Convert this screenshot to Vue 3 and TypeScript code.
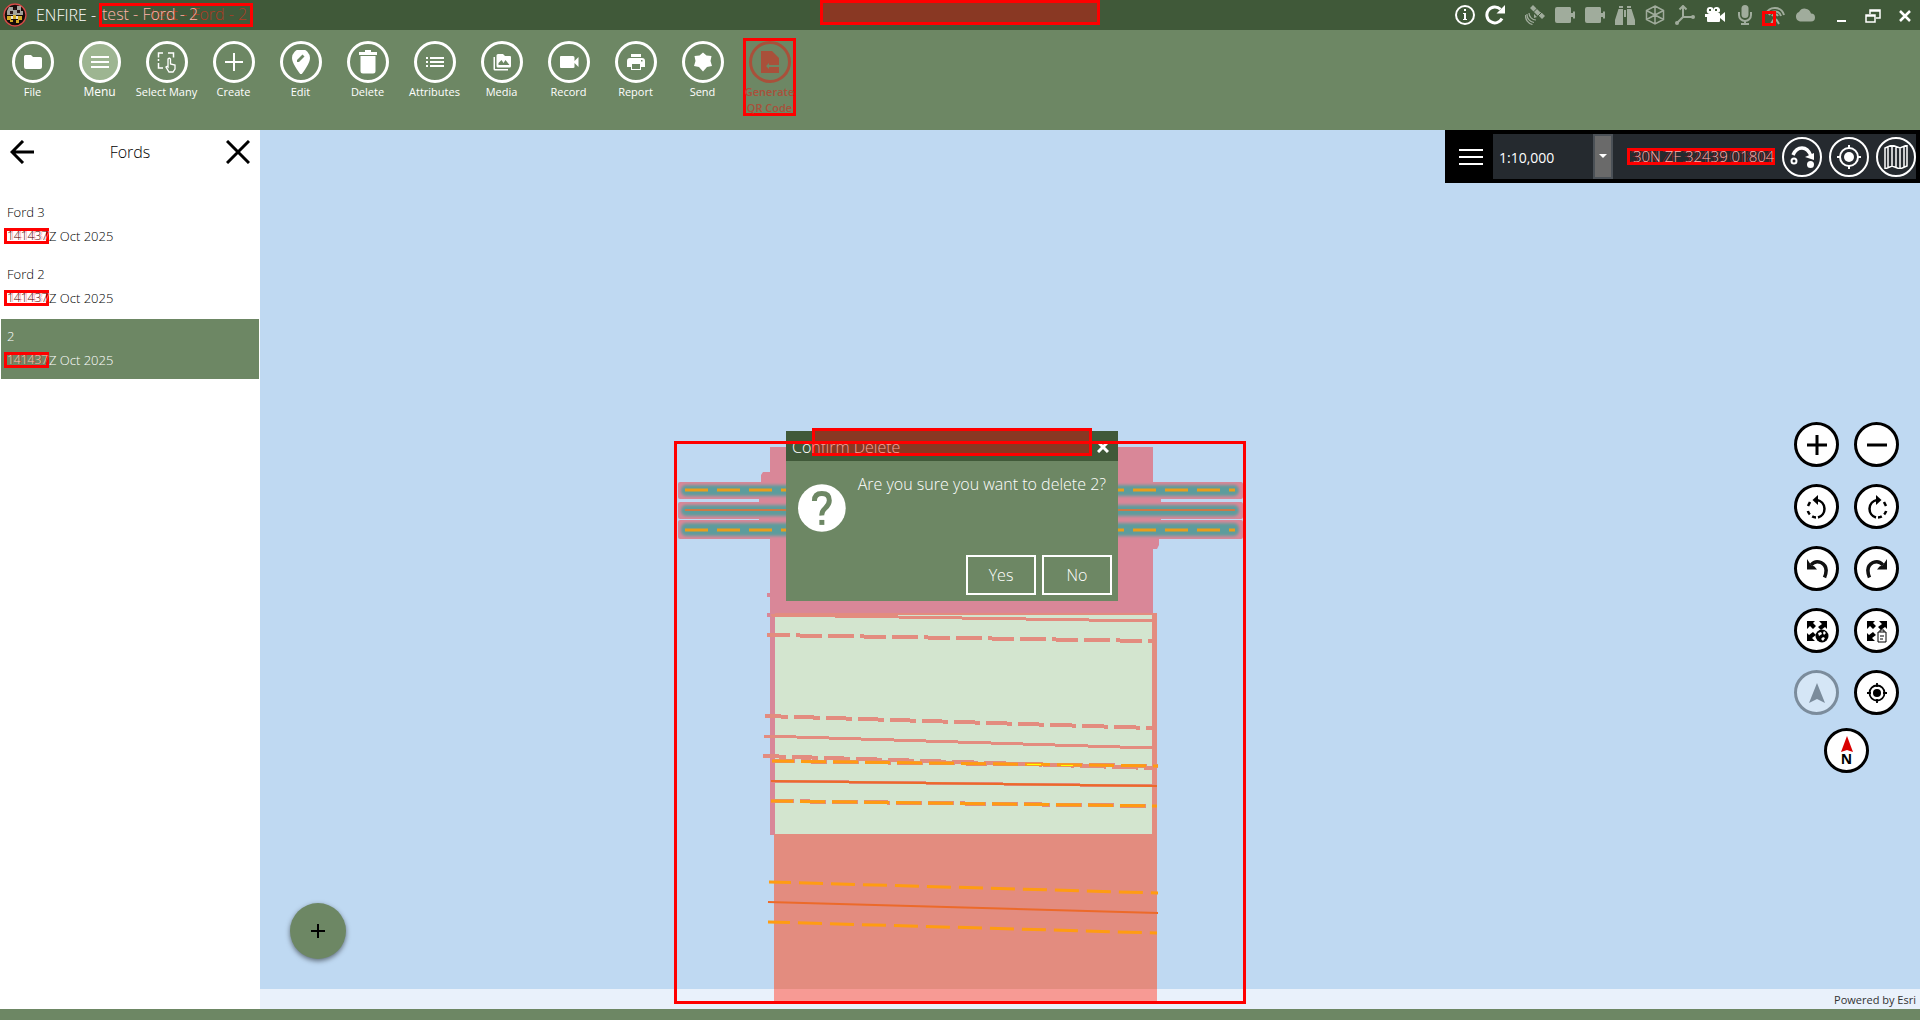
<script setup lang="ts">
import { ref } from 'vue'

interface Tool { label: string; icon: string }
interface Ford { name: string; time: string; date: string }

const tools: Tool[] = [
  { label: 'File', icon: 'file' },
  { label: 'Menu', icon: 'menu' },
  { label: 'Select Many', icon: 'select' },
  { label: 'Create', icon: 'plus' },
  { label: 'Edit', icon: 'edit' },
  { label: 'Delete', icon: 'trash' },
  { label: 'Attributes', icon: 'list' },
  { label: 'Media', icon: 'media' },
  { label: 'Record', icon: 'record' },
  { label: 'Report', icon: 'print' },
  { label: 'Send', icon: 'send' },
]

const fords: Ford[] = [
  { name: 'Ford 3', time: '141437', date: 'Z Oct 2025' },
  { name: 'Ford 2', time: '141437', date: 'Z Oct 2025' },
  { name: '2', time: '141437', date: 'Z Oct 2025' },
]

const devices = ['satellite', 'camera', 'camera', 'binoculars', 'cube', 'axes', 'movie', 'mic', 'antenna', 'cloud']
const mapButtons = ['zoom in', 'zoom out', 'rotate left', 'rotate right', 'undo', 'redo', 'full extent', 'report extent', 'navigate', 'locate']
const selected = ref(2)
const scale = ref('1:10,000')
</script>

<template>
  <div class="app">
    <header class="titlebar">
      <svg class="badge" viewBox="0 0 24 24" aria-hidden="true">
        <circle cx="12" cy="12" r="11.5" fill="#170d0b" />
        <circle cx="12" cy="12" r="11" fill="none" stroke="#d54f4a" stroke-width="1.4" />
        <path d="M6 4h4v3h4V3h4v5h2v4H4V8z" fill="#a3a39c" />
        <path d="M7 8h3v3H7zM14 7h3v3h-3zM11 5h2v2h-2z" fill="#2a1717" />
        <path d="M4 13h4v4H4zM10 12h3v4h-3zM15 13h4v4h-4zM7 17h3v2H7zM13 17h3v3h-3z" fill="#d5ac26" />
        <path d="M8 13h2v3H8zM13 13h2v3h-2z" fill="#ece7d9" />
      </svg>
      <h1 class="app-title">ENFIRE -</h1>
      <span class="mark mark-title">test - Ford - 2</span>
      <span class="mark mark-top"></span>
      <div class="status">
        <button class="bare" aria-label="Information">
          <svg viewBox="0 0 20 20"><circle cx="10" cy="10" r="9" fill="none" stroke="#fff" stroke-width="2" /><path d="M9 4h2v2H9zM8 8h3v6h1v1H8v-1h1V9H8z" fill="#fff" /></svg>
        </button>
        <button class="bare refresh" aria-label="Refresh">
          <svg viewBox="0 0 20 20"><path d="M17 13.5A8 8 0 1 1 15.5 4.2" fill="none" stroke="#fff" stroke-width="3" /><path d="M20 0v8.500h-8.500z" fill="#fff" /></svg>
        </button>
        <span v-for="(d, i) in devices" :key="i" class="device" :class="{ on: d === 'movie' }">
          <svg viewBox="0 0 20 20" fill="currentColor">
            <template v-if="d === 'satellite'">
              <path d="M5 3l3-3 4 4-3 3zM13 10l3-3 4 4-3 3zM9 7l3-3 4 4-3 3zM9 9l3 3-3 1z" />
              <path d="M4 8a7 7 0 0 0 7 7M2 9a8 8 0 0 0 7 8.500M.5 10a9 9 0 0 0 7 9.500" fill="none" stroke="currentColor" stroke-width="1.200" />
              <path d="M8 7.500L12.500 3M12.500 11.500L17 7" stroke="#405939" />
            </template>
            <path v-else-if="d === 'camera'" d="M2 2h13q1 0 1 1.500V8h2V6.500h2v7h-2V12h-2v4.500q0 1.500-1.500 1.500H2q-2 0-2-2V4q0-2 2-2z" />
            <path v-else-if="d === 'binoculars'" d="M4 1h4v2H4zM12 1h4v2h-4zM3.500 4H8v16H0v-5zM12 4h4.500L20 15v5h-8zM9 5h2v7H9z" />
            <path v-else-if="d === 'cube'" d="M10 1l8.500 4.500v9L10 19l-8.500-4.500v-9zM10 10V1M10 10l8.500-4.500M10 10L1.500 5.500M10 10v9M10 10l8.500 4.500M10 10l-8.500 4.500" fill="none" stroke="currentColor" stroke-width="1.500" />
            <template v-else-if="d === 'axes'">
              <path d="M8 1v11h11M8 12l-6 6M4.500 4.500L8 1l3.500 3.500" fill="none" stroke="currentColor" stroke-width="2" /><circle cx="18" cy="12" r="2" /><circle cx="2" cy="18" r="2" />
            </template>
            <path v-else-if="d === 'movie'" d="M5.500 2a3 3 0 0 1 3 3 3 3 0 0 1 3-3 3 3 0 0 1 1 6H14q1 0 1 1v2l5-4v10l-5-4v3q0 1-1 1H3q-1 0-1-1v-4H0V9h5a3.500 3.500 0 0 1 .5-7zM4 4v2h2V4zM10 4v2h2V4z" />
            <template v-else-if="d === 'mic'"><rect x="6.500" y="0" width="7" height="13" rx="3.500" /><path d="M4 7v3a6 6 0 0 0 12 0V7" fill="none" stroke="currentColor" stroke-width="2" /><path d="M9 15h2v3h3v2H6v-2h3z" /></template>
            <path v-else-if="d === 'antenna'" d="M1 9a9.500 9.500 0 0 1 18 1M4 10a6.500 6.500 0 0 1 12 1M7 11a3.500 3.500 0 0 1 6 0M10 11v4M9 14l-3 5M11 14l3 5" fill="none" stroke="currentColor" stroke-width="2" />
            <path v-else d="M5 16.500A5 5 0 0 1 4 7a6.500 6.500 0 0 1 12 1.500 4 4 0 0 1 0 8z" />
          </svg>
          <i v-if="d === 'antenna'" class="mark mark-device"></i>
        </span>
        <button class="bare win" aria-label="Minimize"><svg viewBox="0 0 20 20"><path d="M6 15h9v2H6z" fill="#fff" /></svg></button>
        <button class="bare win" aria-label="Restore"><svg viewBox="0 0 20 20"><path d="M7 9V5h10v8h-4M7 6h10M3 10h9v7H3zM3 11h9" fill="none" stroke="#fff" stroke-width="1.500" /></svg></button>
        <button class="bare win" aria-label="Close window"><svg viewBox="0 0 20 20"><path d="M5 6l10 10M15 6L5 16" stroke="#fff" stroke-width="2.500" /></svg></button>
      </div>
    </header>

    <nav class="toolbar">
      <button v-for="t in tools" :key="t.label" class="tool" :class="{ current: t.label === 'Menu' }">
        <span class="ring">
          <svg viewBox="0 0 24 24" fill="#fff">
            <path v-if="t.icon === 'file'" d="M4.500 5H10l2 2h7.500q1.500 0 1.500 1.500V17q0 2-2 2H5q-2 0-2-2V6.500Q3 5 4.500 5z" />
            <path v-else-if="t.icon === 'menu'" d="M3 6h18v2H3zm0 5h18v2H3zm0 5h18v2H3z" />
            <g v-else-if="t.icon === 'select'" fill="none" stroke="#fff" stroke-width="1.500"><path d="M8 3H3.500v4.500M13 3h5.500v4.500M3.500 13v5H8M3.500 9v2" /><path d="M13 17V9q1.500-1.500 2.500 0v5l4.500 1v4l-2 3h-4l-3-5q1-1 2 0z" stroke-width="1.300" /></g>
            <path v-else-if="t.icon === 'plus'" d="M11 3h2v8h8v2h-8v8h-2v-8H3v-2h8z" />
            <g v-else-if="t.icon === 'edit'"><path d="M12-1a9 9 0 0 1 9 9c0 6-9 17-9 17S3 14 3 8a9 9 0 0 1 9-9z" /><path d="M8 12v-2l5.500-5.500 2 2L10 12z" fill="#6d8764" /></g>
            <path v-else-if="t.icon === 'trash'" d="M9 0h6v2h6v3H3V2h6zM4.500 6h15v15q0 2.500-2.500 2.500H7Q4.500 23.500 4.500 21z" />
            <path v-else-if="t.icon === 'list'" d="M3 7h2v2H3zm0 4h2v2H3zm0 4h2v2H3zM7 7h14v2H7zm0 4h14v2H7zm0 4h14v2H7z" />
            <g v-else-if="t.icon === 'media'"><path d="M8 4h5l2 2h5q1 0 1 1v9q0 1.500-1.500 1.500H8q-1.500 0-1.500-1.500V5.500Q6.500 4 8 4zM3.500 7H5v12h13v1.500H5q-1.500 0-1.500-1.500z" /><path d="M8.500 15v-2l3-3 2 3 2-3 4 5z" fill="#6d8764" /></g>
            <path v-else-if="t.icon === 'record'" d="M4 6h12q1.500 0 1.500 1.500V11l4-4v10l-4-4v4q0 1-1.500 1H4q-1 0-1-1V7q0-1 1-1z" />
            <path v-else-if="t.icon === 'print'" fill-rule="evenodd" d="M7 4h10v3H7zM6 8h12q3 0 3 3v6h-4v3H7v-3H3v-6q0-3 3-3zm2 6v5h8v-5zm9-4v1.500h1.500V10z" />
            <path v-else d="M12 2.500l3.500 3 5 .5-1 5 1.500 5-5 1-4 4.500L8 17l-5-1 1.500-5-1-5 5-.5z" />
          </svg>
        </span>
        <span>{{ t.label }}</span>
      </button>
      <button class="tool qr">
        <span class="ring"><svg viewBox="0 0 24 24" fill="currentColor"><path d="M3 1h11l7 7v7H11v-2l-3 3 3 3v-2h10v6H3z" /></svg></span>
        <span>Generate<br />QR Code</span>
      </button>
    </nav>

    <main class="body">
      <aside class="panel">
        <div class="panel-head">
          <button class="bare big" aria-label="Back"><svg viewBox="0 0 24 24"><path d="M24 12H2M13 1L2 12l11 11" fill="none" stroke="#000" stroke-width="3" /></svg></button>
          <h2>Fords</h2>
          <button class="bare big" aria-label="Close panel"><svg viewBox="0 0 24 24"><path d="M1 1l22 22M23 1L1 23" stroke="#000" stroke-width="3" /></svg></button>
        </div>
        <ul class="fords">
          <li v-for="(f, i) in fords" :key="i">
            <button class="ford" :class="{ active: i === selected }" @click="selected = i">
              <span class="ford-name">{{ f.name }}</span>
              <span class="ford-date"><span class="mark mark-time">{{ f.time }}</span>{{ f.date }}</span>
            </button>
          </li>
        </ul>
      </aside>

      <section class="map" aria-label="Map">
        <footer class="credit">Powered by Esri</footer>

        <svg class="drawing" viewBox="674 441 572 563" aria-hidden="true">
          <defs><filter id="soft" x="-5%" y="-50%" width="110%" height="200%"><feGaussianBlur stdDeviation="1.500" /></filter></defs>
          <g fill="#d98798">
            <path d="M770 447h383v167H770zM761 475l2-3h7v26h-9zM759 497h11v24h-11zM1153 497h8v24h-8zM1153 535h6v10l-2 4h-4zM767 593h4v4h-4zM767 613h4v4h-4z" />
            <rect x="678" y="482" width="565" height="17" rx="2" />
            <rect x="678" y="502" width="565" height="17" rx="2" />
            <rect x="678" y="520" width="565" height="19" rx="2" />
            <path d="M770 614h5v221h-5z" />
          </g>
          <g fill="#5d9c9c" filter="url(#soft)">
            <rect x="681" y="485" width="558" height="11" rx="5" />
            <rect x="681" y="505" width="558" height="11" rx="5" />
            <rect x="681" y="523" width="558" height="13" rx="5" />
          </g>
          <path d="M685 490h550M685 530h550" stroke="#ea9d1b" stroke-width="3" stroke-dasharray="23 9" />
          <path d="M685 510h550" stroke="#cb7947" stroke-width="2" />
          <path d="M775 614h377v220H775z" fill="#d3e5cf" />
          <path d="M775 613h377v2H775zM1152 613h5v221h-5zM774 834h383v155H774z" fill="#e38c7f" />
          <path d="M774 989h383v13H774z" fill="#f79a94" />
          <g stroke="#e38c7f" stroke-width="3" fill="none" shape-rendering="crispEdges">
            <path d="M771 615L1152 621M764 736L1152 748M771 781L1157 786" />
            <path d="M767 635L1152 641M765 716L1152 728M763 756L1152 768" stroke-width="4" stroke-dasharray="26 6" stroke-dashoffset="3" />
            <path d="M772 761L1158 766M771 801L1157 806" stroke-width="4" stroke-dasharray="26 6" stroke-dashoffset="3" />
          </g>
          <g stroke="#ff9c12" stroke-width="3" fill="none">
            <path d="M772 761L1158 766M771 801L1157 806" stroke-dasharray="25 7" stroke-dashoffset="3" />
            <path d="M769 882L1158 893M768 922L1157 933" stroke-dasharray="24 8" stroke-dashoffset="2" />
          </g>
          <path d="M1027 764.500h14M1061 765.500h12" stroke="#ff0" />
          <path d="M771 781L1157 786M768 902L1158 913" stroke="#ec6a2a" stroke-width="2" />
        </svg>

        <div class="mapbar">
          <button class="mapmenu" aria-label="Map menu"><svg viewBox="0 0 24 24"><path d="M0 5h24M0 12h24M0 19h24" stroke="#fff" stroke-width="2" /></svg></button>
          <div class="scale">
            <select v-model="scale" aria-label="Map scale"><option>1:10,000</option></select>
            <span class="caret"></span>
          </div>
          <div class="coords"><span class="mark mark-coords">30N ZF 32439 01804</span></div>
          <button class="round dark" aria-label="Measure">
            <svg viewBox="0 0 24 24" fill="#fff"><path d="M3 10Q6 3 12 3t9 8" fill="none" stroke="#fff" stroke-width="3.500" /><path d="M15 12l9-4v7z" /><circle cx="4" cy="16" r="2.500" fill="none" stroke="#fff" stroke-width="2" /><circle cx="20.500" cy="19.500" r="3.500" /></svg>
          </button>
          <button class="round dark" aria-label="Center on position">
            <svg viewBox="0 0 24 24"><circle cx="12" cy="12" r="9" fill="none" stroke="#fff" stroke-width="2" /><circle cx="12" cy="12" r="5" fill="#fff" /><path d="M12 0v4M12 20v4M0 12h4M20 12h4" stroke="#fff" stroke-width="2" /></svg>
          </button>
          <button class="round dark" aria-label="Basemap">
            <svg viewBox="0 0 24 24"><path d="M1 3l7-3 8 3 7-3v21l-7 3-8-3-7 3zM8 0v21M16 3v21M4 2v20M12 2v20M20 2v20" fill="none" stroke="#fff" stroke-width="1.500" /></svg>
          </button>
        </div>

        <div class="controls">
          <button v-for="(b, i) in mapButtons" :key="b" class="round light" :disabled="b === 'navigate'" :aria-label="b">
            <svg viewBox="0 0 24 24">
              <path v-if="i === 0" d="M12 2v20M2 12h20" stroke="#000" stroke-width="3" />
              <path v-else-if="i === 1" d="M2 12h20" stroke="#000" stroke-width="3" />
              <g v-else-if="i === 2 || i === 3" :transform="i === 3 ? 'matrix(-1 0 0 1 24 0)' : undefined" fill="none" stroke="#000" stroke-width="2.500">
                <path d="M12 5a9 9 0 0 1 1 17.500" /><path d="M11 22.500a9 9 0 0 1-8.500-9" stroke-dasharray="4 3" /><path d="M3 11l2-4" /><path d="M13 0v10L7.500 5z" fill="#000" stroke="none" />
              </g>
              <g v-else-if="i === 4 || i === 5" :transform="i === 5 ? 'matrix(-1 0 0 1 24 0)' : undefined">
                <path d="M6 8q4-5 10-2.500 8 4 3.500 15" fill="none" stroke="#111" stroke-width="3.500" /><path d="M2 2v10.500h10L9.500 9.500 6 8z" fill="#111" />
              </g>
              <g v-else-if="i === 6 || i === 7" fill="#000">
                <path d="M2 2h8L8 4l3 3-3 3-3-3-3 3zM22 2v8l-2-2-4 3-3-3 4-3-3-3zM2 22v-8l2 2 4-3 3 3-4 3 3 3z" />
                <g v-if="i === 6"><circle cx="17" cy="17" r="6.500" /><path d="M13 14l3-1 1 2-3 2zM19 12l2 2-2 2-1-2zM16 20l2-2 2 1-2 3z" fill="#fff" /></g>
                <g v-else fill="none" stroke="#000"><path d="M13 13h8v10h-8zM15 13v-2h4v2M15 17h4M15 20h3" /></g>
              </g>
              <path v-else-if="i === 8" d="M12 2l8 20-8-4-8 4z" fill="#000" />
              <g v-else><circle cx="12" cy="12" r="7.500" fill="none" stroke="#000" stroke-width="1.800" /><circle cx="12" cy="12" r="4" /><path d="M12 2v4M12 18v4M2 12h4M18 12h4" stroke="#000" stroke-width="1.800" /></g>
            </svg>
          </button>
          <button class="round light north" aria-label="North up">
            <svg viewBox="0 0 12 16"><path d="M6 0l6 16-6-2-6 2z" fill="#d90000" /></svg>
            <span>N</span>
          </button>
        </div>

        <button class="fab" aria-label="Add"><svg viewBox="0 0 14 14"><path d="M7 0v14M0 7h14" stroke="#000" stroke-width="2" /></svg></button>

        <div class="dialog" role="dialog" aria-labelledby="dialog-title">
          <div class="dialog-head">
            <span class="mark mark-dialog"></span>
            <h2 id="dialog-title">Co<span class="tinted">nfirm Delete</span></h2>
            <button class="bare close" aria-label="Close dialog"><svg viewBox="0 0 12 12"><path d="M1 1l10 10M11 1L1 11" stroke="#fff" stroke-width="3" /></svg></button>
          </div>
          <div class="dialog-body">
            <svg class="question" viewBox="0 0 48 48"><circle cx="24" cy="24" r="24" fill="#fff" /><path d="M16.500 17q0-7.500 7.500-7.500t7.500 7q0 4-4 7.500t-3.500 7.500" fill="none" stroke="#6d8764" stroke-width="5" /><path d="M21.500 36h5v5h-5z" fill="#6d8764" /></svg>
            <p>Are you sure you want to delete 2?</p>
          </div>
          <div class="dialog-actions"><button>Yes</button><button>No</button></div>
        </div>
        <div class="frame"></div>
      </section>
    </main>
    <div class="bottom"></div>
  </div>
</template>

<style>
body { margin: 0; }
</style>

<style scoped>
* { box-sizing: border-box; }
.app { min-height: 100vh; display: flex; flex-direction: column; font-family: "Open Sans", "Noto Sans", sans-serif; font-size: 12px; }
button { font: inherit; color: inherit; cursor: pointer; }
svg { display: block; }
h1, h2, p, ul { margin: 0; padding: 0; font-weight: 300; }
.bare { padding: 0; border: 0; background: none; width: 20px; height: 20px; flex: none; }
.bare svg { width: 100%; height: 100%; }
.mark { border: 3px solid #f00; }

.titlebar { position: relative; display: flex; align-items: center; height: 30px; padding-left: 3px; background: #405939; color: #fff; }
.badge { width: 24px; height: 24px; }
.app-title { width: 62px; margin-left: 9px; font-size: 16px; line-height: 24px; white-space: nowrap; }
.mark-title { width: 154px; height: 24px; margin-left: 1px; font-size: 16px; font-weight: 300; line-height: 16px; color: #ffb4aa; white-space: nowrap; overflow: hidden; text-shadow: 49px 0 #b03c24; }
.mark-top { position: absolute; left: calc(50% - 140px); top: 0; width: 280px; height: 25px; background: #893823; }
.status { display: flex; align-items: center; gap: 10px; margin-left: auto; padding-right: 5px; }
.refresh { margin-right: 10px; }
.device { position: relative; width: 20px; height: 20px; color: #a0ac9c; }
.device.on { color: #fff; }
.mark-device { position: absolute; left: -3px; top: 6px; width: 14px; height: 15px; }
.win { margin-left: 2px; }
.win:nth-last-child(3) { margin-left: 6px; }

.toolbar { display: flex; align-items: flex-start; gap: 2px; height: 100px; padding-top: 8px; background: #6d8764; color: #fff; }
.tool { display: flex; flex-direction: column; align-items: center; width: 65px; padding: 3px 0 0; border: 0; background: none; font-size: 11px; line-height: 16px; white-space: nowrap; }
.ring { display: flex; align-items: center; justify-content: center; flex: none; width: 42px; height: 42px; margin-bottom: 1px; border: 3px solid currentColor; border-radius: 50%; }
.ring svg { width: 24px; height: 24px; }
.current .ring { background: #9db591; }
.current { font-size: 12px; }
.qr { width: 53px; height: 78px; margin-left: 6px; padding: 0; border: 3px solid #f00; color: #a9503a; font-weight: 600; }

.body { display: flex; flex: 1; }
.panel { width: 260px; background: #fff; color: #000; }
.panel-head { display: flex; align-items: center; justify-content: space-between; height: 44px; margin-bottom: 21px; padding: 0 10px; }
.panel-head h2 { font-size: 16px; }
.big { width: 24px; height: 24px; }
.fords { list-style: none; padding: 0 1px; display: flex; flex-direction: column; gap: 2px; }
.ford { display: flex; flex-direction: column; gap: 8px; width: 100%; height: 60px; padding: 9px 3px 0; border: 0; background: none; font-size: 13px; line-height: 16px; text-align: left; }
.ford-name { padding-left: 3px; }
.ford-date { display: flex; }
.mark-time { width: 45px; height: 16px; font-size: 12px; line-height: 10px; white-space: nowrap; color: #501010; text-shadow: 2px 0 #ff9c9c; }
.ford.active { background: #6d8764; color: #fff; }
.active .mark-time { color: #ffc0b4; text-shadow: 2px 0 #a8503c; }

.map { position: relative; flex: 1; background: #bfd9f2; overflow: hidden; }
.credit { position: absolute; left: 0; right: 0; bottom: 0; height: 20px; padding-right: 4px; background: #e9f1fb; color: #333; font-size: 11px; line-height: 21px; text-align: right; }
.drawing, .frame { position: absolute; left: calc(50% - 416px); top: 311px; width: 572px; height: 563px; }
.frame { border: 3px solid #f00; pointer-events: none; }

.mapbar { position: absolute; right: 0; top: 0; display: flex; align-items: center; width: 475px; height: 53px; border: 4px solid #000; background: #252a2f; color: #fff; }
.mapmenu { display: flex; align-items: center; justify-content: center; width: 44px; height: 45px; border: 0; background: #000; }
.mapmenu svg { width: 24px; height: 24px; flex: none; }
.scale { position: relative; width: 120px; height: 45px; }
.scale select { width: 100%; height: 100%; padding: 2px 6px 0; border: 0; appearance: none; background: #252a2f; color: #fff; font: 14px "Open Sans", sans-serif; }
.caret { position: absolute; right: 0; top: 0; width: 20px; height: 45px; border: 2px solid #4b5157; background: #6a6a6a; pointer-events: none; }
.caret::after { content: ""; position: absolute; left: 4px; top: 18px; border: 4px solid transparent; border-top-color: #fff; }
.coords { flex: 1; padding-left: 14px; }
.mark-coords { display: block; width: 148px; height: 17px; padding-left: 3px; font-size: 15px; font-weight: 300; line-height: 11px; color: #ffb0b0; white-space: nowrap; text-shadow: -3px 0 #901a1c; }
.round { display: flex; align-items: center; justify-content: center; flex: none; padding: 0; border-radius: 50%; }
.round svg { width: 24px; height: 24px; }
.dark { width: 40px; height: 40px; margin-left: 7px; border: 2px solid #fff; background: none; }
.coords + .dark { margin-left: 0; }

.controls { position: absolute; right: 21px; top: 292px; display: grid; grid-template-columns: 45px 45px; gap: 17px 15px; }
.light { width: 45px; height: 45px; border: 3px solid #000; background: #fff; }
.light:disabled { opacity: 0.35; }
.north { grid-column: span 2; justify-self: center; flex-direction: column; margin-top: -4px; color: #000; font-size: 14px; font-weight: 700; line-height: 13px; }
.north svg { width: 12px; height: 16px; }

.fab { position: absolute; left: 30px; bottom: 50px; display: flex; align-items: center; justify-content: center; width: 56px; height: 56px; padding: 0; border: 0; border-radius: 50%; background: #6d8764; box-shadow: 0 2px 5px rgba(0, 0, 0, 0.5); }
.fab svg { width: 14px; height: 14px; }

.dialog { position: absolute; left: calc(50% - 304px); top: 301px; width: 332px; height: 170px; background: #6d8764; color: #fff; }
.dialog-head { position: relative; display: flex; align-items: center; justify-content: space-between; height: 30px; padding: 2px 9px 0 6px; background: #405939; }
.dialog-head h2 { position: relative; font-size: 16px; line-height: 24px; }
.tinted { color: #f7a39a; }
.close { width: 12px; height: 12px; }
.mark-dialog { position: absolute; left: 26px; top: -3px; width: 280px; height: 28px; background: #893823; }
.dialog-body { display: flex; gap: 12px; height: 94px; padding: 12px 12px 0; }
.dialog-body p { font-size: 16px; line-height: 22px; white-space: nowrap; }
.question { width: 48px; height: 48px; margin-top: 11px; }
.dialog-actions { display: flex; justify-content: flex-end; gap: 6px; padding-right: 6px; }
.dialog-actions button { width: 70px; height: 40px; border: 2px solid #fff; background: none; font-size: 16px; font-weight: 300; }
.bottom { height: 11px; background: #6d8764; }
</style>
